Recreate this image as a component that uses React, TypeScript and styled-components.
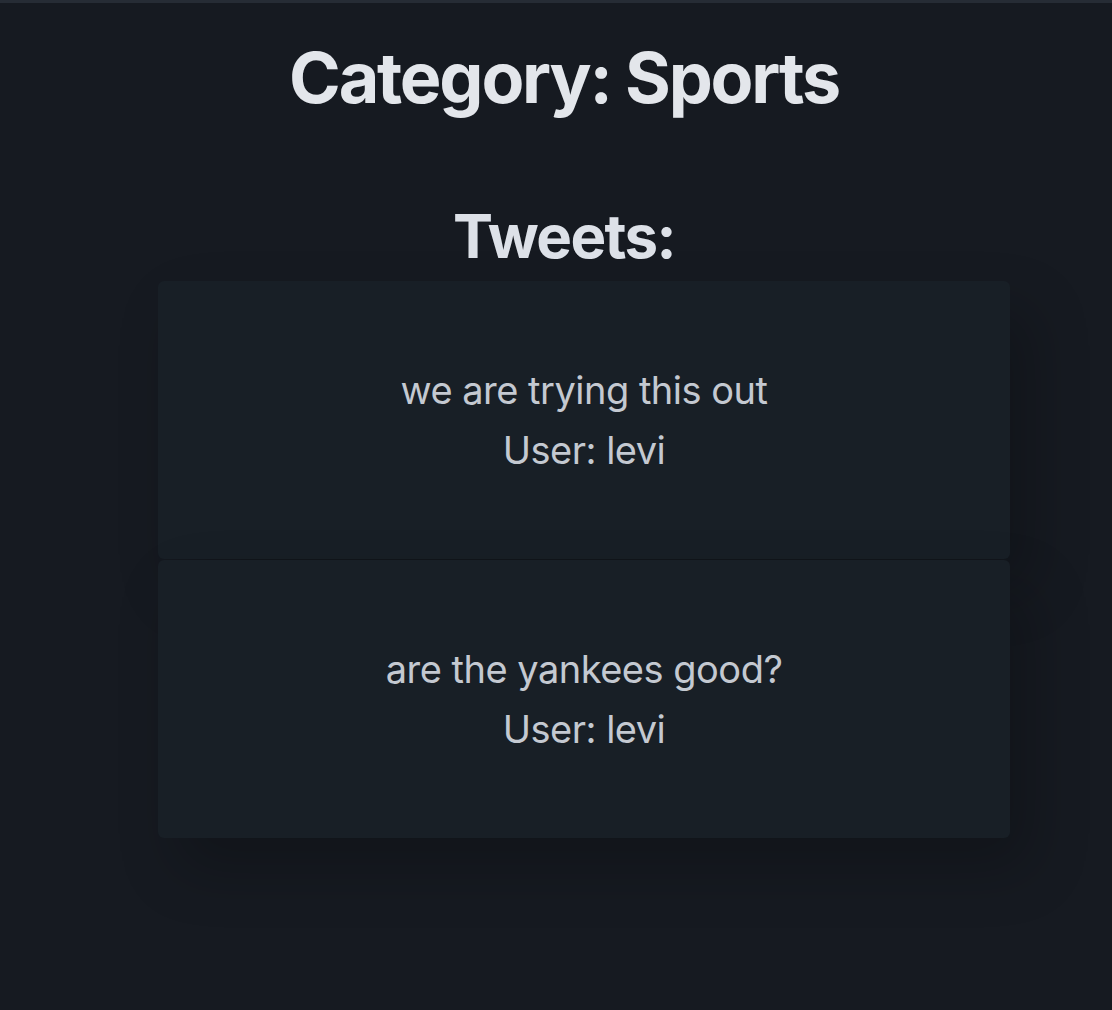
import React from "react";
import styled, { createGlobalStyle } from "styled-components";

const Global = createGlobalStyle`
  html, body {
    margin: 0;
    padding: 0;
    background: #161a21;
  }
  body {
    font-family: Inter, "Noto Sans", "Liberation Sans", sans-serif;
  }
`;

const Page = styled.div`
  min-height: 1010px;
  box-sizing: border-box;
  border-top: 3px solid #262c35;
  background: #161a21;
  display: flex;
  flex-direction: column;
  align-items: stretch;
`;

const Title = styled.h1`
  margin: 31px 0 0;
  text-align: center;
  transform: translateX(8px);
  font-size: 70px;
  font-weight: 700;
  line-height: 88px;
  color: #e3e6eb;
  letter-spacing: -2.2px;
`;

const SubTitle = styled.h2`
  margin: 78px 0 0;
  text-align: center;
  transform: translateX(8px);
  font-size: 60px;
  font-weight: 700;
  line-height: 72px;
  color: #dde1e8;
  letter-spacing: -1.6px;
`;

const List = styled.div`
  margin: 9px 0 0 158px;
  width: 852px;
  display: flex;
  flex-direction: column;
  gap: 1px;
`;

const Card = styled.div`
  box-sizing: border-box;
  height: 278px;
  padding: 79px 20px;
  background: #181f26;
  border-radius: 6px;
  box-shadow: 20px 30px 60px rgba(0, 0, 0, 0.22);
  display: flex;
  flex-direction: column;
  align-items: center;
`;

const Line = styled.div`
  font-size: 38px;
  line-height: 60px;
  color: #c4c9d1;
  text-align: center;
  letter-spacing: -0.5px;
`;

const tweets = [
  { text: "we are trying this out", user: "levi" },
  { text: "are the yankees good?", user: "levi" },
];

export default function App() {
  return (
    <>
      <Global />
      <Page>
        <Title>Category: Sports</Title>
        <SubTitle>Tweets:</SubTitle>
        <List>
          {tweets.map((t, i) => (
            <Card key={i}>
              <Line>{t.text}</Line>
              <Line>User: {t.user}</Line>
            </Card>
          ))}
        </List>
      </Page>
    </>
  );
}
